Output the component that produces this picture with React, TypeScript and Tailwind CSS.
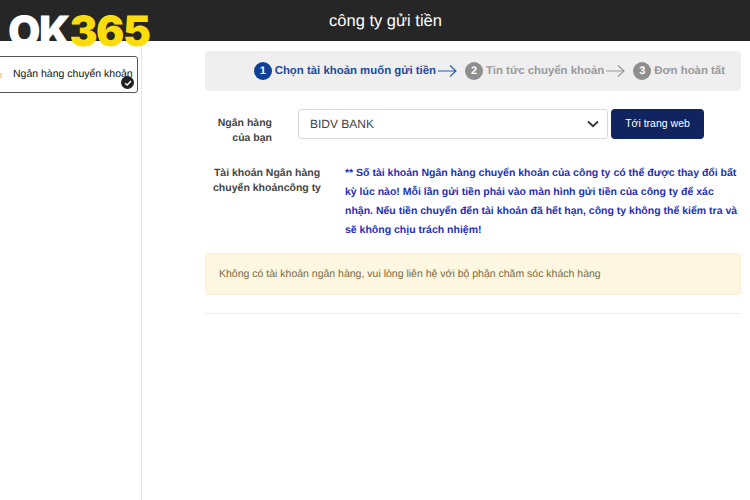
import React from "react";

const Arrow = ({ color }: { color: string }) => (
  <svg width="19" height="14" viewBox="0 0 19 14" fill="none" stroke={color} strokeWidth="1.1" className="shrink-0">
    <path d="M0 7 H18 M12 1.5 L18 7 L12 12.5" />
  </svg>
);

const Step = ({ n, label, active }: { n: number; label: string; active?: boolean }) => (
  <div className="flex items-center gap-[3px]">
    <span className={`flex h-[18px] w-[18px] items-center justify-center rounded-full text-[11px] font-bold text-white ${active ? "bg-[#0f4098]" : "bg-[#8e8e8e]"}`}>{n}</span>
    <span className={`whitespace-nowrap pt-[2px] text-[11.4px] font-bold ${active ? "text-[#1c4a9c]" : "text-[#9a9a9a]"}`}>{label}</span>
  </div>
);

export default function App() {
  return (
    <div className="relative h-[500px] w-[750px] overflow-hidden bg-white font-['Liberation_Sans',Arial,sans-serif] [text-rendering:geometricPrecision]">
      <header className="flex h-[41px] items-center justify-center bg-[#262626] pl-[21px]">
        <h1 className="pt-[1px] text-[16.5px] text-white">công ty gửi tiền</h1>
      </header>
      <div className="absolute left-[8px] top-[7px] flex text-[42px] leading-[50px] tracking-[-1.5px] font-['Inter',sans-serif]">
        <span className="font-black text-white">OK</span>
        <span className="font-black text-[#fbdc0c]">365</span>
      </div>
      <div className="flex h-[459px]">
        <aside className="w-[142px] shrink-0 border-r border-[#e6e6e6] pt-[15px]">
          <div className="relative -ml-[3px] flex h-[37px] w-[141px] items-center rounded-[3px] border border-[#555] pl-[15px] text-[10.5px] text-[#111]">
            <span className="absolute left-[2px] top-[16px] h-[5px] w-[2px] bg-[#f3d9a0]" />
            <span className="whitespace-nowrap">Ngân hàng chuyển khoản</span>
            <span className="absolute bottom-[3px] right-[3px] flex h-[13px] w-[13px] items-center justify-center rounded-full bg-[#222]">
              <svg width="8" height="8" viewBox="0 0 8 8" fill="none" stroke="#fff" strokeWidth="1.4"><path d="M1 4.2 L3.2 6 L7 2" /></svg>
            </span>
          </div>
        </aside>
        <main className="flex-1 pl-[63px] pr-[9px] pt-[10px]">
          <div className="flex h-[40px] items-center justify-end gap-[2px] rounded-[4px] bg-[#efefef] pr-[16px]">
            <Step n={1} label="Chọn tài khoản muốn gửi tiền" active />
            <Arrow color="#2a5cb0" />
            <span className="w-[4px]" />
            <Step n={2} label="Tin tức chuyển khoản" />
            <Arrow color="#9a9a9a" />
            <span className="w-[4px]" />
            <Step n={3} label="Đơn hoàn tất" />
          </div>
          <div className="mt-[18px] flex">
            <div className="w-[67px] pt-[7px] text-right text-[10.5px] font-bold leading-[15px] text-[#444]">Ngân hàng<br />của bạn</div>
            <div className="ml-[26px] flex h-[30px] w-[310px] items-center justify-between rounded-[3px] border border-[#d9d9d9] pl-[11px] pr-[8px] text-[12px] text-[#444]">
              <span>BIDV BANK</span>
              <svg width="12" height="8" viewBox="0 0 12 8" fill="none" stroke="#333" strokeWidth="1.8"><path d="M1 1.5 L6 6.2 L11 1.5" /></svg>
            </div>
            <button className="ml-[3px] h-[30px] w-[93px] rounded-[4px] bg-[#10245f] text-[10.5px] text-white">Tới trang web</button>
          </div>
          <div className="mt-[18px] flex">
            <div className="w-[124px] pt-[2px] text-center text-[10.5px] font-bold leading-[15px] text-[#444]">Tài khoản Ngân hàng<br />chuyển khoảncông ty</div>
            <p className="ml-[16px] flex-1 pr-[2px] text-[10.5px] font-bold leading-[19px] text-[#1f2fb5]">** Số tài khoản Ngân hàng chuyển khoản của công ty có thể được thay đổi bất kỳ lúc nào! Mỗi lần gửi tiền phải vào màn hình gửi tiền của công ty để xác nhận. Nếu tiền chuyển đến tài khoản đã hết hạn, công ty không thể kiểm tra và sẽ không chịu trách nhiệm!</p>
          </div>
          <div className="mt-[13px] flex h-[42px] items-center rounded-[3px] border border-[#faf0d4] bg-[#fdf6e0] pl-[13px] pt-[2px] text-[10.5px] text-[#7c6a3e]">
            Không có tài khoản ngân hàng, vui lòng liên hệ với bộ phận chăm sóc khách hàng
          </div>
          <div className="mt-[18px] h-px bg-[#eeeeee]" />
        </main>
      </div>
    </div>
  );
}
